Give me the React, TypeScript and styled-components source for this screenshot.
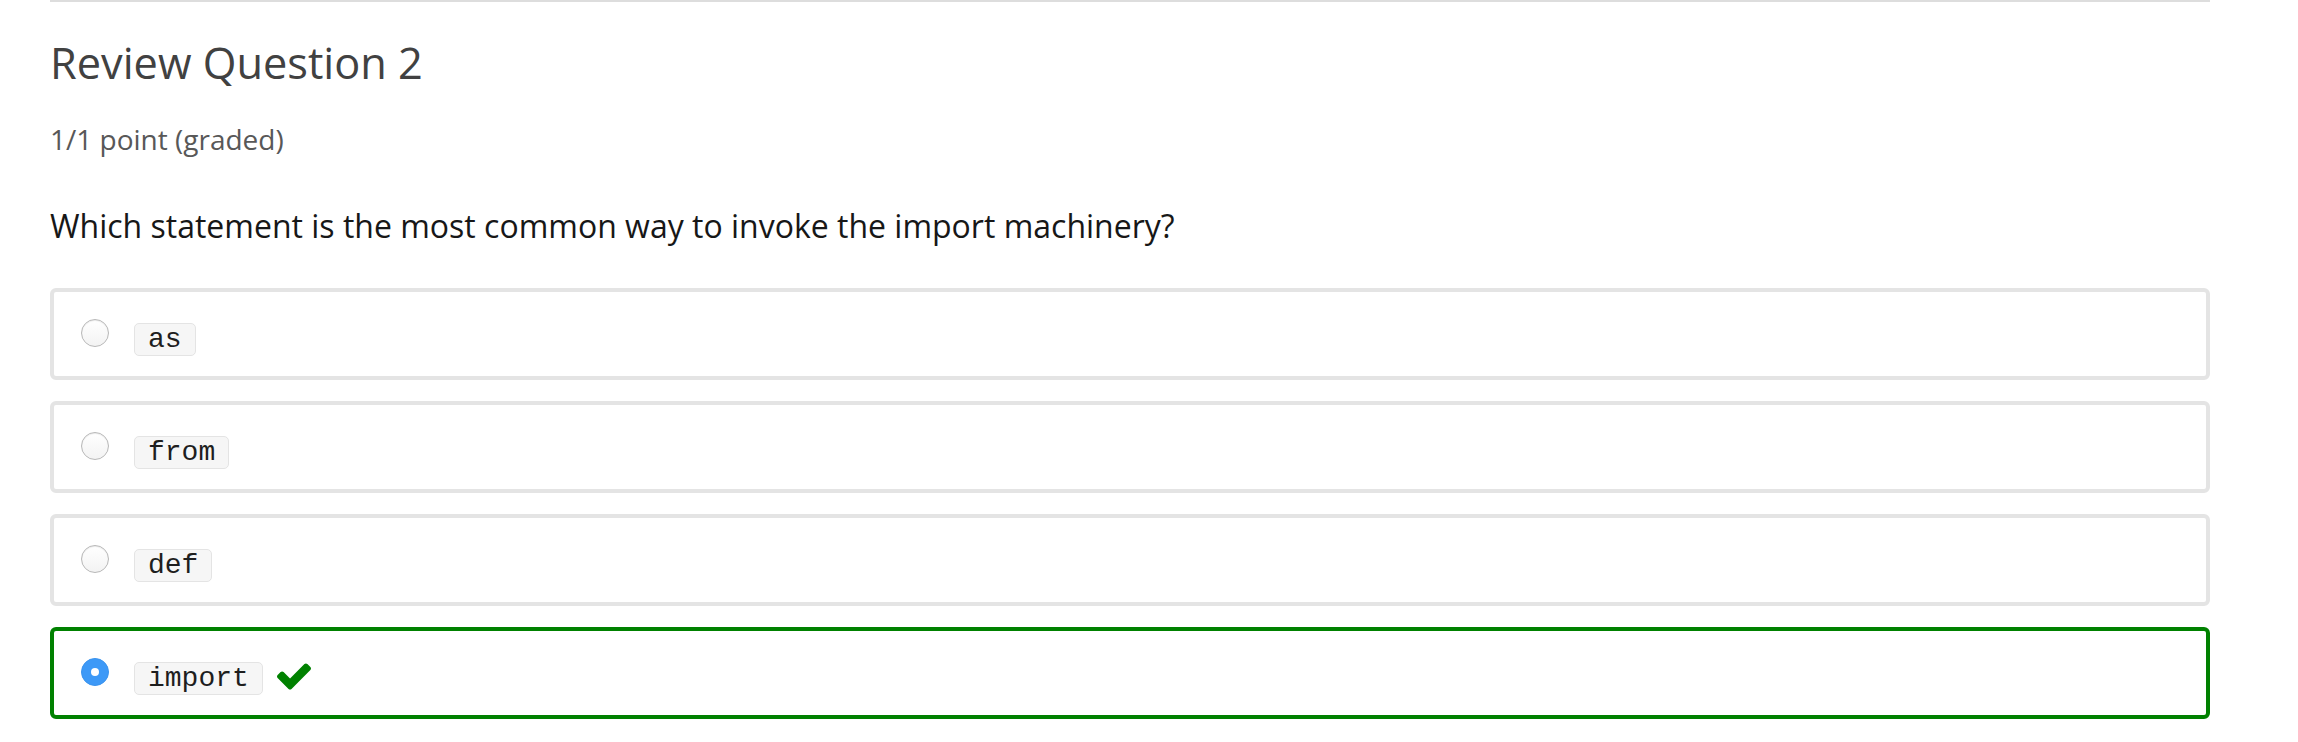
import React from "react";
import styled, { createGlobalStyle } from "styled-components";

const Global = createGlobalStyle`
  html, body { margin: 0; padding: 0; background: #fff; }
  body { font-family: "Open Sans", "Noto Sans", sans-serif; }
`;

const Page = styled.div`
  width: 2298px;
  height: 742px;
  box-sizing: border-box;
  padding: 0 88px 0 50px;
`;

const Problem = styled.section`
  border-top: 2px solid #dddddd;
  display: flex;
  flex-direction: column;
`;

const Heading = styled.h3`
  margin: 35px 0 0 0;
  font-size: 43.3px;
  line-height: 52px;
  font-weight: 400;
  color: #414141;
`;

const Points = styled.div`
  margin-top: 32px;
  font-size: 28px;
  line-height: 36px;
  color: #585858;
`;

const Prompt = styled.p`
  margin: 47px 0 0 0;
  font-size: 32px;
  line-height: 44px;
  color: #171717;
`;

const Choices = styled.div`
  margin-top: 40px;
  display: flex;
  flex-direction: column;
  gap: 21px;
`;

const Choice = styled.label<{ $correct?: boolean }>`
  box-sizing: border-box;
  height: 92px;
  border: 4px solid ${(p) => (p.$correct ? "#008100" : "#e4e4e4")};
  border-radius: 6px;
  padding: 27px 0 0 27px;
  display: flex;
  align-items: flex-start;
`;

const Radio = styled.span<{ $checked?: boolean }>`
  box-sizing: border-box;
  width: 28px;
  height: 28px;
  border-radius: 50%;
  flex: none;
  display: flex;
  align-items: center;
  justify-content: center;
  ${(p) =>
    p.$checked
      ? `background: #3d99f7; border: 1px solid #3a93ee;`
      : `background: linear-gradient(#ffffff, #f3f3f3); border: 1.5px solid #b8b8b8; box-shadow: inset 0 1px 1px rgba(0,0,0,0.08);`}
`;

const Dot = styled.span`
  width: 8px;
  height: 8px;
  border-radius: 50%;
  background: #ffffff;
`;

const Code = styled.code`
  margin: 4px 0 0 25px;
  box-sizing: border-box;
  height: 33px;
  padding: 1px 13px;
  border: 1px solid #e4e4e4;
  border-radius: 5px;
  background: #f6f6f6;
  font-family: "Liberation Mono", "Courier New", monospace;
  font-size: 28px;
  line-height: 29px;
  color: #1e1e1e;
`;

const Check = styled.svg`
  margin: 5px 0 0 14px;
  width: 34px;
  height: 27px;
`;

const choices = [
  { text: "as" },
  { text: "from" },
  { text: "def" },
  { text: "import", correct: true },
];

export default function App() {
  return (
    <>
      <Global />
      <Page>
        <Problem>
          <Heading>Review Question 2</Heading>
          <Points>1/1 point (graded)</Points>
          <Prompt>Which statement is the most common way to invoke the import machinery?</Prompt>
          <Choices>
            {choices.map((c) => (
              <Choice key={c.text} $correct={c.correct}>
                <Radio $checked={c.correct}>{c.correct && <Dot />}</Radio>
                <Code>{c.text}</Code>
                {c.correct && (
                  <Check viewBox="121 334 1550 1188">
                    <path
                      fill="#008100"
                      d="M1671 566q0 40-28 68l-724 724-136 136q-28 28-68 28t-68-28l-136-136-362-362q-28-28-28-68t28-68l136-136q28-28 68-28t68 28l294 295 656-657q28-28 68-28t68 28l136 136q28 28 28 68z"
                    />
                  </Check>
                )}
              </Choice>
            ))}
          </Choices>
        </Problem>
      </Page>
    </>
  );
}
